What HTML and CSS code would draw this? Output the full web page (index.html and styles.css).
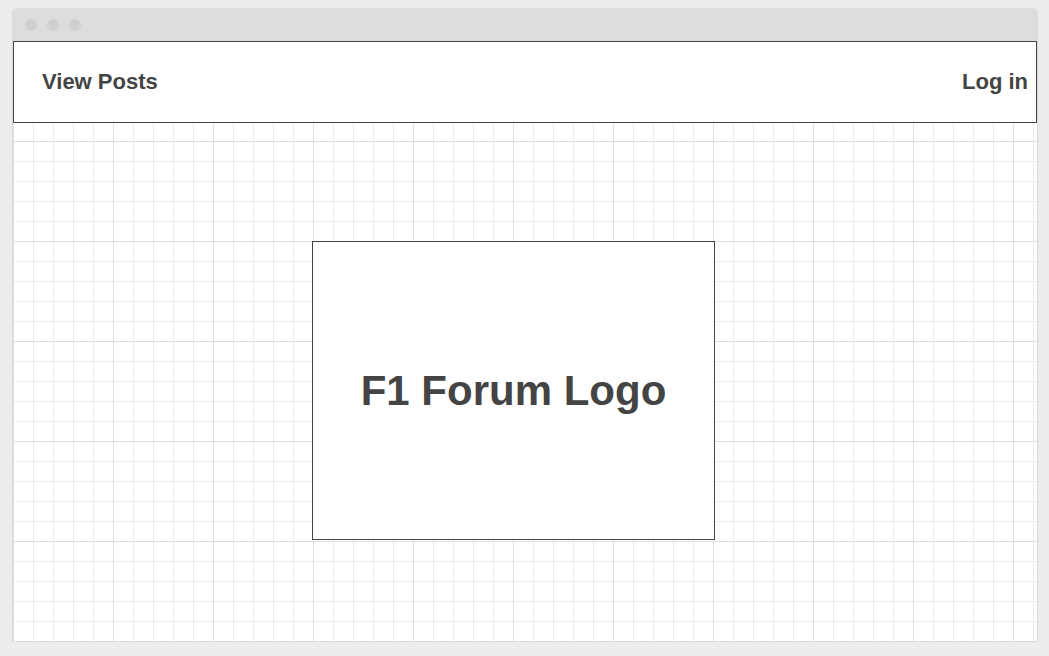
FILE: index.html
```html
<!DOCTYPE html>
<html lang="en">
<head>
<meta charset="utf-8">
<title>F1 Forum</title>
<link rel="stylesheet" href="styles.css">
</head>
<body>
<div class="window">
  <div class="titlebar">
    <span class="dot"></span>
    <span class="dot"></span>
    <span class="dot"></span>
  </div>
  <div class="content">
    <nav class="nav">
      <a class="nav-link" href="#">View Posts</a>
      <a class="nav-link" href="#">Log in</a>
    </nav>
    <main class="main">
      <div class="logo">F1 Forum Logo</div>
    </main>
  </div>
</div>
</body>
</html>
```

FILE: styles.css
```css
html, body {
  margin: 0;
  padding: 0;
}
body {
  background: #ededed;
  font-family: "Liberation Sans", Arial, sans-serif;
  color: #444;
  padding: 8px 11px 0 12px;
}
.window {
  width: 1024px;
  border: 1px solid #dcdcdc;
  border-top: none;
  border-radius: 5px 5px 0 0;
  box-shadow: 0 1px 2px rgba(0,0,0,0.05);
  background: #fff;
}
.titlebar {
  height: 33px;
  background: #dddddd;
  border-radius: 5px 5px 0 0;
  margin: 0 -1px;
  display: flex;
  align-items: center;
  gap: 10px;
  padding-left: 13px;
}
.dot {
  width: 12px;
  height: 12px;
  border-radius: 50%;
  background: #cfcfcf;
}
.content {
  height: 600px;
  display: flex;
  flex-direction: column;
  background-color: #fff;
  background-image:
    linear-gradient(to right, #dedede 1px, transparent 1px),
    linear-gradient(to bottom, #dedede 1px, transparent 1px),
    linear-gradient(to right, #ececec 1px, transparent 1px),
    linear-gradient(to bottom, #ececec 1px, transparent 1px);
  background-size: 100px 100px, 100px 100px, 20px 20px, 20px 20px;
}
.nav {
  height: 80px;
  border: 1px solid #444;
  background: #fff;
  display: flex;
  align-items: center;
  justify-content: space-between;
  padding: 0 8px 0 28px;
  flex: none;
}
.nav-link {
  font-size: 22px;
  font-weight: bold;
  color: #444;
  text-decoration: none;
}
.main {
  flex: 1;
  padding: 118px 0 0 299px;
}
.logo {
  box-sizing: border-box;
  width: 403px;
  height: 299px;
  border: 1px solid #444;
  background: #fff;
  display: flex;
  align-items: center;
  justify-content: center;
  font-size: 42px;
  font-weight: bold;
  color: #444;
}
```
